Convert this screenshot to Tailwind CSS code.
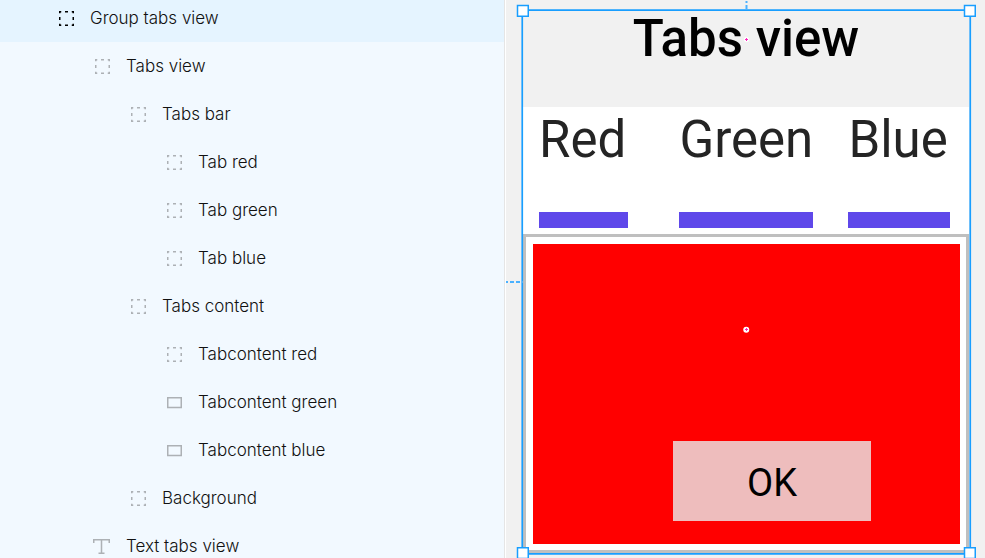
<!DOCTYPE html>
<html lang="en">
<head>
<meta charset="utf-8">
<title>Layers</title>
<script src="https://cdn.jsdelivr.net/npm/@tailwindcss/browser@4"></script>
</head>
<body class="overflow-hidden">
<svg class="hidden">
  <symbol id="group" viewBox="0 0 16 16"><path fill="currentColor" d="M0 0h2.250v1.500H1.500v.75H0zM6 0h3v1.500H6zM12.750 0H15v2.250h-1.500V1.500h-.75zM0 6h1.500v3H0zM13.500 6H15v3h-1.500zM0 12.750h1.500v.75h.75V15H0zM6 13.500h3V15H6zM13.500 12.750H15V15h-2.250v-1.500h.75z"/></symbol>
  <symbol id="rect" viewBox="0 0 16 12"><path fill="none" stroke="currentColor" stroke-width="1.500" d="M.75 .75h13.500v9.750H.75z"/></symbol>
  <symbol id="text" viewBox="0 0 18 16"><path fill="none" stroke="currentColor" stroke-width="1.500" d="M.75 4V.75h15.500V4M8.500 .75v13.500M5.500 14.250h6"/></symbol>
</svg>
<div class="flex h-[558px] w-[985px] overflow-hidden bg-[#f1f1f1]">
  <aside class="h-full w-[506px] shrink-0 border-r border-white">
    <ul class="h-full border-r border-[#e5e5e5] bg-[#f2f9ff] font-[Inter,sans-serif] text-[17px] font-light leading-6 text-[#111]">
      <li class="flex h-[42px] items-start bg-[#e5f4ff] pl-[59px] pt-[6px]"><svg class="mt-[5px] h-4 w-4 text-black"><use href="#group"/></svg><span class="ml-[15px]">Group tabs view</span></li>
      <li class="flex h-12 items-center pl-[95px]"><svg class="mt-px h-4 w-4 text-[#adb1b5]"><use href="#group"/></svg><span class="ml-[15px]">Tabs view</span></li>
      <li class="flex h-12 items-center pl-[131px]"><svg class="mt-px h-4 w-4 text-[#adb1b5]"><use href="#group"/></svg><span class="ml-[15px]">Tabs bar</span></li>
      <li class="flex h-12 items-center pl-[167px]"><svg class="mt-px h-4 w-4 text-[#adb1b5]"><use href="#group"/></svg><span class="ml-[15px]">Tab red</span></li>
      <li class="flex h-12 items-center pl-[167px]"><svg class="mt-px h-4 w-4 text-[#adb1b5]"><use href="#group"/></svg><span class="ml-[15px]">Tab green</span></li>
      <li class="flex h-12 items-center pl-[167px]"><svg class="mt-px h-4 w-4 text-[#adb1b5]"><use href="#group"/></svg><span class="ml-[15px]">Tab blue</span></li>
      <li class="flex h-12 items-center pl-[131px]"><svg class="mt-px h-4 w-4 text-[#adb1b5]"><use href="#group"/></svg><span class="ml-[15px]">Tabs content</span></li>
      <li class="flex h-12 items-center pl-[167px]"><svg class="mt-px h-4 w-4 text-[#adb1b5]"><use href="#group"/></svg><span class="ml-[15px]">Tabcontent red</span></li>
      <li class="flex h-12 items-center pl-[167px]"><svg class="mt-[2px] h-3 w-4 text-[#adb1b5]"><use href="#rect"/></svg><span class="ml-[15px]">Tabcontent green</span></li>
      <li class="flex h-12 items-center pl-[167px]"><svg class="mt-[2px] h-3 w-4 text-[#adb1b5]"><use href="#rect"/></svg><span class="ml-[15px]">Tabcontent blue</span></li>
      <li class="flex h-12 items-center pl-[131px]"><svg class="mt-px h-4 w-4 text-[#adb1b5]"><use href="#group"/></svg><span class="ml-[15px]">Background</span></li>
      <li class="flex h-12 items-center pl-[93px]"><svg class="mt-[2px] h-4 w-[18px] text-[#adb1b5]"><use href="#text"/></svg><span class="ml-[15px]">Text tabs view</span></li>
    </ul>
  </aside>
  <main class="relative h-full flex-1 pl-[17px] pt-[10px] font-[Roboto,sans-serif] text-[51px] leading-[58px]">
    <section class="flex h-[543px] w-[446px] flex-col">
      <h1 class="h-[96.500px] text-center font-medium text-black">Tabs view</h1>
      <div class="flex h-[127.500px] items-start bg-white pl-4 pt-[4px] text-[#242424]">
        <div class="flex h-[117px] w-[89px] flex-col justify-between"><span class="-ml-px pl-px">Red</span><i class="h-[16px] bg-[#5f48ea]"></i></div>
        <div class="ml-[51.400px] flex h-[117px] w-[134px] flex-col justify-between"><span>Green</span><i class="h-[16px] bg-[#5f48ea]"></i></div>
        <div class="ml-[35px] flex h-[117px] w-[102px] flex-col justify-between"><span>Blue</span><i class="h-[16px] bg-[#5f48ea]"></i></div>
      </div>
      <div class="flex-1 border-[3px] border-[#bfbfbf] bg-white pl-[7px] pt-[7px]">
        <div class="flex h-[300px] w-[427px] items-start bg-[#ff0000] pl-[140px] pt-[197px]">
          <div class="flex h-[80px] w-[198px] items-center justify-center bg-[#eebdbd] pt-[3px] text-[38px] text-black">OK</div>
        </div>
      </div>
    </section>
    <!-- selection outline, handles and guides -->
    <svg class="absolute left-0 top-0" width="479" height="558" fill="none">
      <path stroke="#189eff" stroke-width="1.700" d="M16.250 10.100H464.250V553.800H16.250z"/>
      <path stroke="#4ab1ff" stroke-width="2" stroke-dasharray="4 2" d="M240.500 1V10M0 282H17" stroke-dashoffset="2"/>
      <g fill="#fff" stroke="#189eff" stroke-width="1.500">
        <path d="M11.500 5.400h10.750v10.750h-10.750zM458.500 5.400h10.750v10.750h-10.750zM11.500 547.750h10.750v10.750h-10.750zM458.500 547.750h10.750v10.750h-10.750z"/>
      </g>
      <circle cx="240.500" cy="39.500" r="2.500" fill="#fff"/>
      <path stroke="#ff24bd" d="M239 39.500h3M240.500 38v3"/>
      <circle cx="240.250" cy="329.750" r="3" fill="#fff"/>
      <path stroke="#ff24bd" d="M239 329.500h3M240.500 328v3"/>
    </svg>
  </main>
</div>
</body>
</html>
